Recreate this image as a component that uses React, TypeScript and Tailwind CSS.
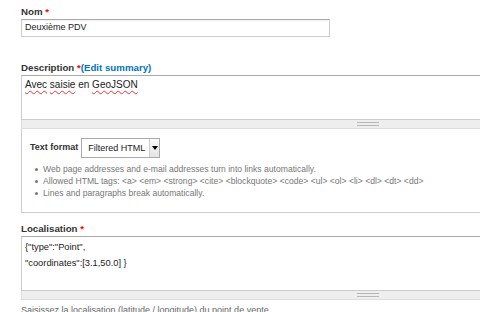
const Required = () => <span className="text-[#f00]">*</span>;

const Grippie = () => (
  <div className="h-[9px] bg-[#eee] border border-t-0 border-[#ddd] flex items-center justify-center">
    <div className="w-[22px] h-[4px] border-t border-b border-[#b8b8b8]" />
  </div>
);

const Wavy = ({ children }: { children: React.ReactNode }) => (
  <span className="underline decoration-wavy decoration-[#e33] decoration-1 underline-offset-[2px]">{children}</span>
);

const tips = [
  "Web page addresses and e-mail addresses turn into links automatically.",
  "Allowed HTML tags: <a> <em> <strong> <cite> <blockquote> <code> <ul> <ol> <li> <dl> <dt> <dd>",
  "Lines and paragraphs break automatically.",
];

export default function App() {
  return (
    <div className="w-[480px] h-[312px] overflow-hidden bg-white font-['Liberation_Sans',Arial,sans-serif] text-[#333]">
      <div className="w-[720px] pl-[21px] pt-[5px]">
        {/* Nom */}
        <label className="block text-[9.7px] font-bold leading-[14px]">
          Nom <Required />
        </label>
        <div className="w-[309px] h-[18px] border border-[#ccc] border-t-[#aaa] shadow-[inset_0_1px_1px_rgba(0,0,0,0.06)] pl-[3px] text-[9px] leading-[15px] text-[#222]">
          Deuxième PDV
        </div>

        {/* Description */}
        <label className="block mt-[24px] text-[9.7px] font-bold leading-[14px]">
          Description <Required />
          <a className="text-[#0074bd]">(Edit summary)</a>
        </label>
        <div className="w-[694px]">
          <div className="h-[45px] border border-[#ccc] border-t-[#aaa] pl-[3px] pt-[1px] text-[10px] leading-[16px] text-[#222]">
            <Wavy>Avec</Wavy> <Wavy>saisie</Wavy> en <Wavy>GeoJSON</Wavy>
          </div>
          <Grippie />
          <div className="border-l border-b border-[#ccc] pl-[8px] pt-[9px] pb-[13px]">
            <div className="flex items-center gap-[3px]">
              <span className="text-[9px] font-bold">Text format</span>
              <div className="flex w-[79px] h-[20px] border border-[#aaa] bg-white">
                <span className="flex-1 pl-[6px] text-[9px] leading-[18px] text-[#222]">Filtered HTML</span>
                <span className="w-[10px] border-l border-[#ccc] bg-[linear-gradient(#fafafa,#e4e4e4)] flex items-center justify-center">
                  <span className="w-0 h-0 border-l-[3px] border-r-[3px] border-t-[4px] border-l-transparent border-r-transparent border-t-black" />
                </span>
              </div>
            </div>
            <ul className="mt-[5px] text-[8.6px] leading-[12px] text-[#777]">
              {tips.map((t) => (
                <li key={t} className="flex items-center">
                  <span className="ml-[5px] mr-[5px] w-[3px] h-[3px] rounded-full bg-[#777]" />
                  {t}
                </li>
              ))}
            </ul>
          </div>
        </div>

        {/* Localisation */}
        <label className="block mt-[9px] text-[9.7px] font-bold leading-[14px]">
          Localisation <Required />
        </label>
        <div className="w-[694px]">
          <div className="h-[55px] border border-[#ccc] border-t-[#aaa] pl-[3px] pt-[2px] text-[9.3px] leading-[16px] text-[#222]">
            <div>{'{"type":"Point",'}</div>
            <div>{'"coordinates":[3.1,50.0] }'}</div>
          </div>
          <Grippie />
        </div>
        <p className="mt-[4px] text-[9px] leading-[13px] text-[#666]">
          Saisissez la localisation (latitude / longitude) du point de vente
        </p>
      </div>
    </div>
  );
}
